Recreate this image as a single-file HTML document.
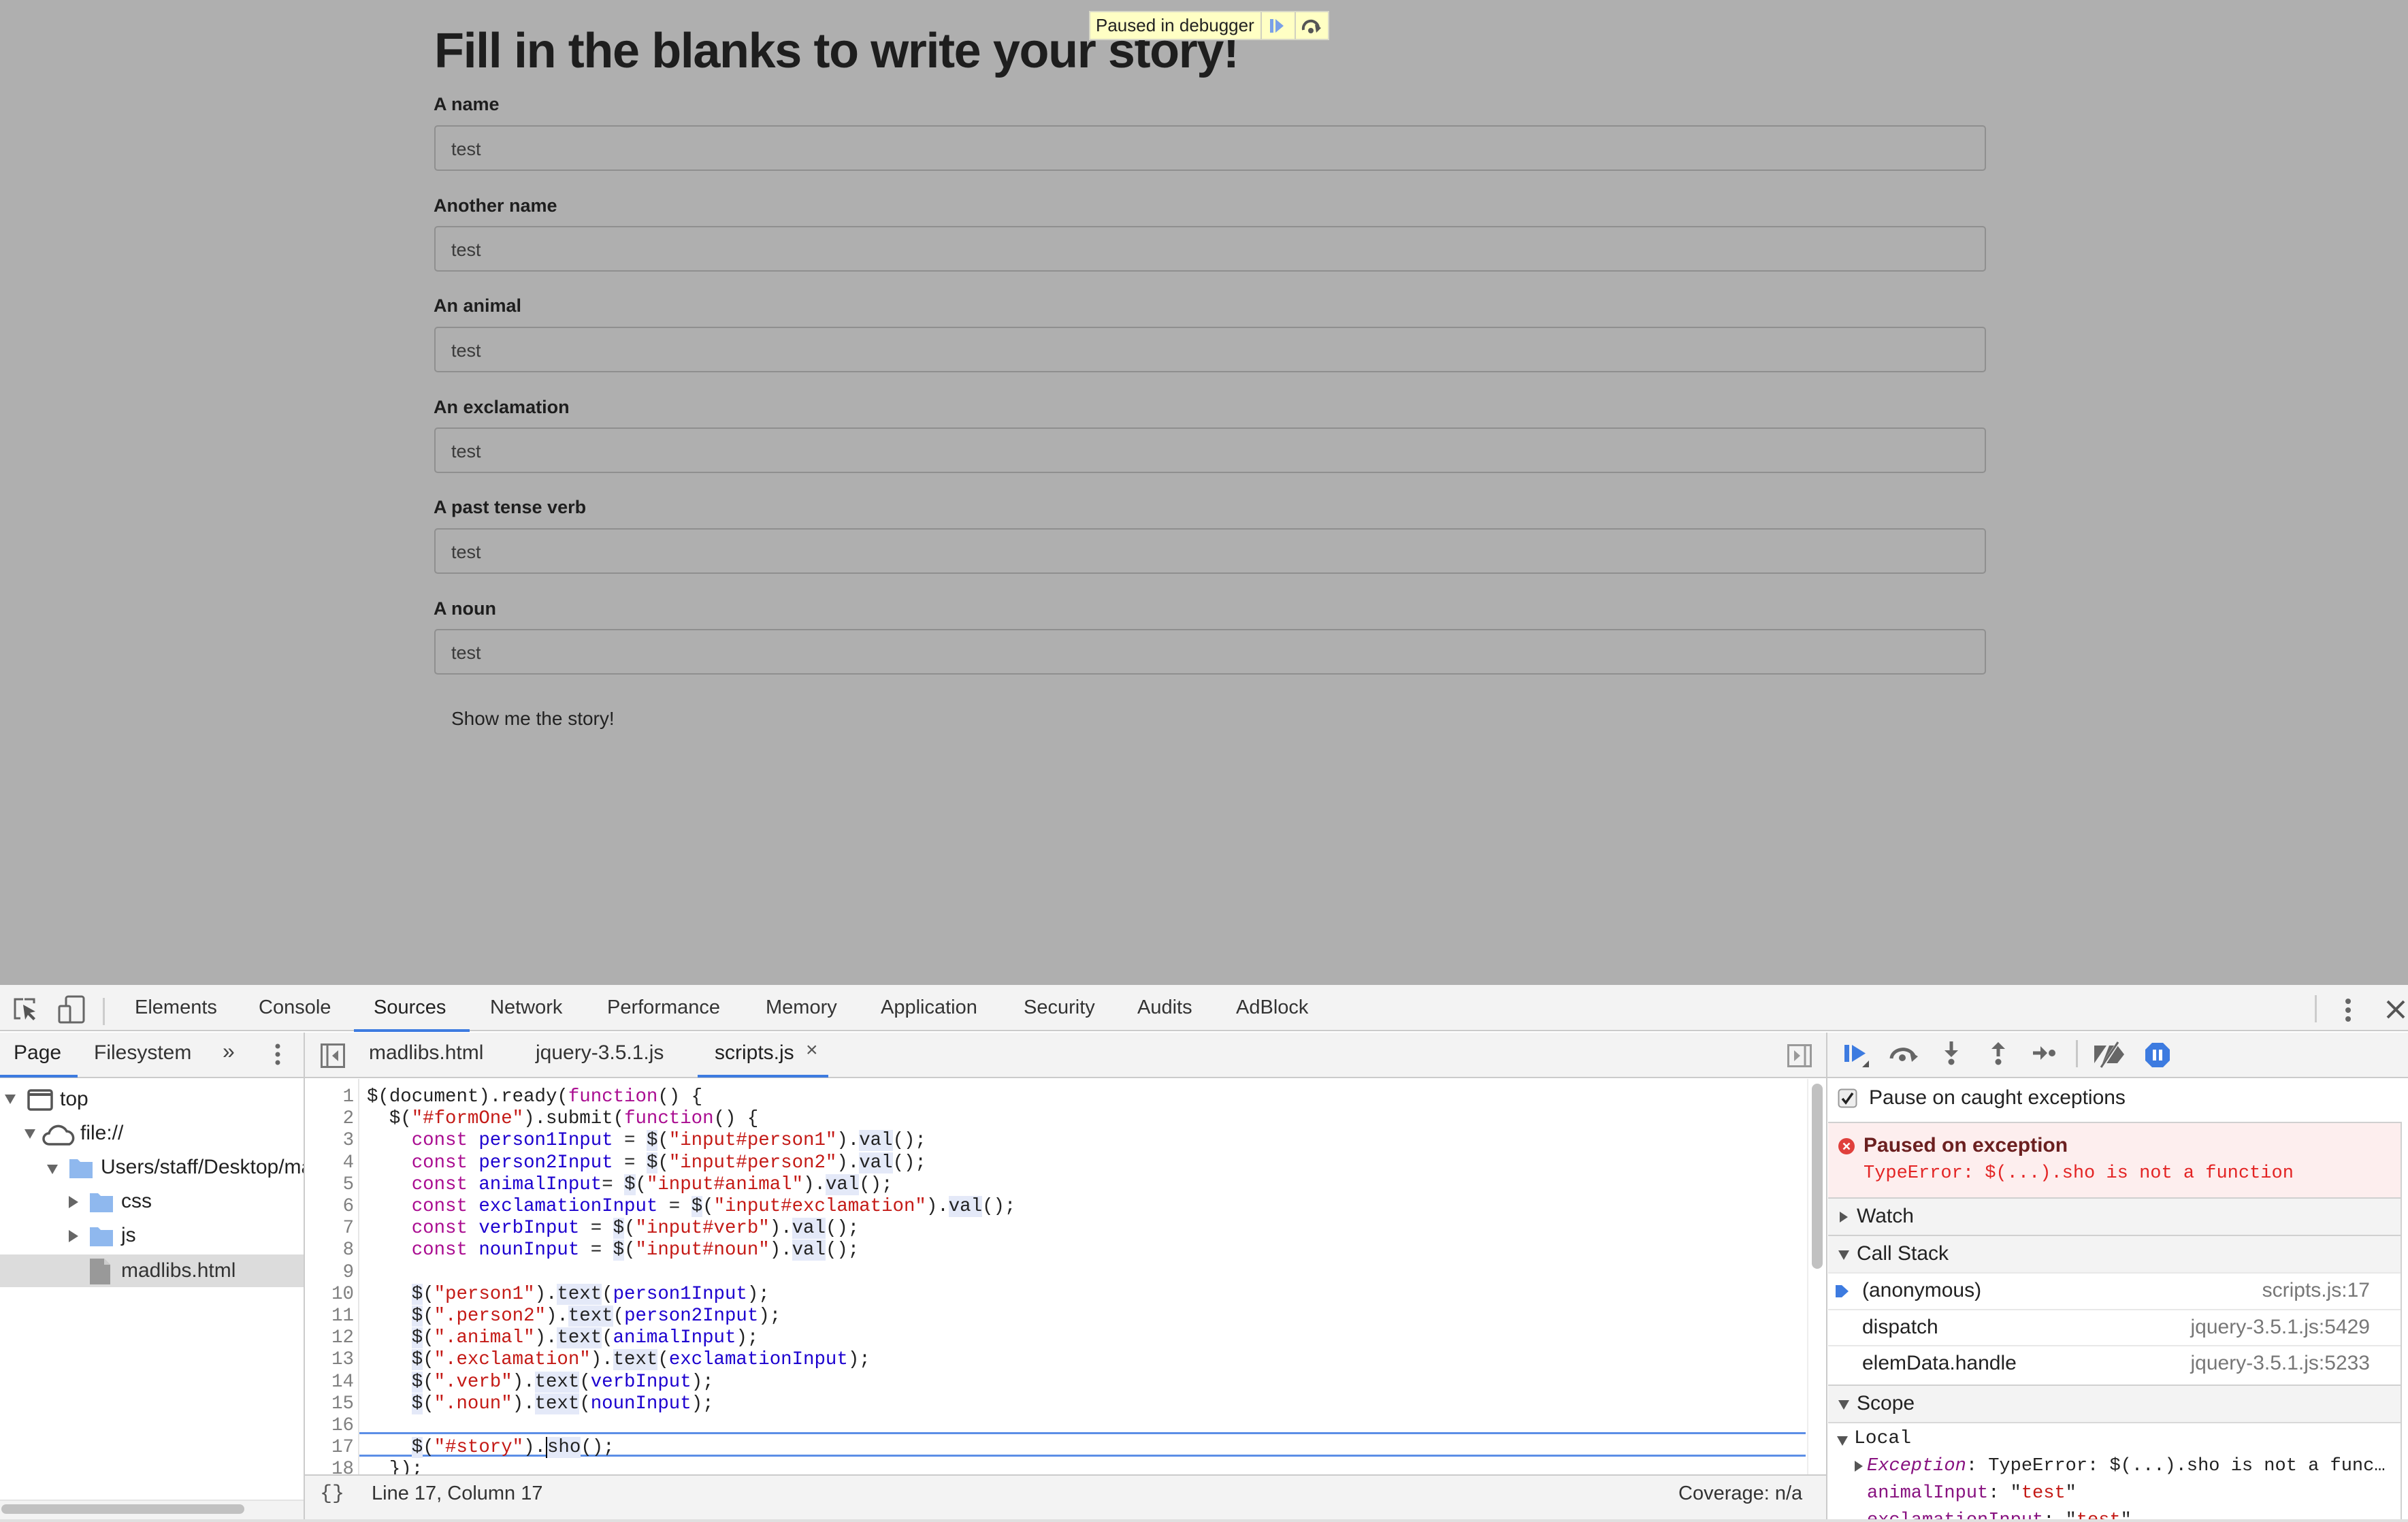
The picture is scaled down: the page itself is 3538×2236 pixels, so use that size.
<!DOCTYPE html>
<html><head><meta charset="utf-8"><style>
*{margin:0;padding:0;box-sizing:border-box}
body{width:3538px;height:2236px;overflow:hidden;position:relative;background:#afafaf;font-family:"Liberation Sans",sans-serif;color:#222}
.a{position:absolute;white-space:nowrap}
.lbl{position:absolute;left:637px;font-size:27px;font-weight:bold;color:#1e1e1e;line-height:30px}
.inp{position:absolute;left:638px;width:2280px;height:67px;border:2px solid #8f8f8f;border-radius:5px;background:#afafaf}
.inp span{position:absolute;left:23px;top:18px;font-size:27px;color:#3a3a3a}
.mono{font-family:"Liberation Mono","DejaVu Sans Mono",monospace}
.tab{position:absolute;top:1462px;font-size:29px;color:#333;line-height:36px}
.code{position:absolute;left:539px;font-family:"Liberation Mono",monospace;font-size:27.4px;line-height:32.2px;white-space:pre;color:#222}
.ln{position:absolute;width:520px;text-align:right;left:0;font-family:"Liberation Mono",monospace;font-size:27.4px;line-height:32.2px;color:#808080}
.k{color:#aa0d91}.s{color:#c41a16}.v{color:#1c00cf}.h{background:#e4e9f8}
.sec{position:absolute;left:2686px;width:842px;background:#f3f3f3;border-top:2px solid #d0d0d0;font-size:30px;color:#222}
.row{position:absolute;left:2686px;width:842px;background:#fff;border-top:2px solid #e8e8e8;font-size:30px;color:#222}
.tree{position:absolute;font-size:30px;color:#222}
</style></head><body>

<div class="a" style="left:638px;top:30px;font-size:72px;font-weight:bold;color:#1e1e1e;letter-spacing:-1.4px;line-height:90px">Fill in the blanks to write your story!</div>
<div class="a" style="left:1600px;top:16px;width:353px;height:43px;background:#ffffc4;border:2px solid #d8d8c8;font-size:26px;line-height:38px;padding-left:8px;color:#222">Paused in debugger
<div class="a" style="left:250px;top:0;width:2px;height:40px;background:#d0d0c0"></div>
<svg class="a" style="left:262px;top:8px" width="26" height="24"><rect x="2" y="2" width="5" height="20" fill="#7aa0e8"/><path d="M10 2 L22 12 L10 22Z" fill="#7aa0e8"/></svg>
<div class="a" style="left:300px;top:0;width:2px;height:40px;background:#d0d0c0"></div>
<svg class="a" style="left:308px;top:8px" width="34" height="26"><path d="M5 18 A11 11 0 0 1 27 14" stroke="#555" stroke-width="4" fill="none"/><path d="M22 10 L31 15 L24 22Z" fill="#555"/><circle cx="16" cy="19" r="4" fill="#555"/></svg>
</div>

<div class="lbl" style="top:138px">A name</div>
<div class="inp" style="top:184px"><span>test</span></div>
<div class="lbl" style="top:287px">Another name</div>
<div class="inp" style="top:332px"><span>test</span></div>
<div class="lbl" style="top:434px">An animal</div>
<div class="inp" style="top:480px"><span>test</span></div>
<div class="lbl" style="top:583px">An exclamation</div>
<div class="inp" style="top:628px"><span>test</span></div>
<div class="lbl" style="top:730px">A past tense verb</div>
<div class="inp" style="top:776px"><span>test</span></div>
<div class="lbl" style="top:879px">A noun</div>
<div class="inp" style="top:924px"><span>test</span></div>
<div class="a" style="left:663px;top:1040px;font-size:28px;color:#222">Show me the story!</div>

<!-- devtools -->
<div class="a" style="left:0;top:1447px;width:3538px;height:789px;background:#fff"></div>
<div class="a" style="left:0;top:1447px;width:3538px;height:68px;background:#f3f3f3;border-bottom:2px solid #cbcbcb"></div>
<svg class="a" style="left:20px;top:1466px" width="40" height="36"><path d="M14 2 H2 V30 H10" stroke="#666" stroke-width="3" fill="none"/><path d="M16 2 H30 V8" stroke="#666" stroke-width="3" fill="none"/><path d="M14 10 L32 20 L24 22 L32 30 L29 33 L21 25 L17 32Z" fill="#555"/></svg>
<svg class="a" style="left:85px;top:1462px" width="42" height="42"><rect x="12" y="2" width="26" height="38" rx="3" stroke="#666" stroke-width="3" fill="none"/><rect x="2" y="16" width="16" height="24" rx="2" stroke="#666" stroke-width="3" fill="#f3f3f3"/></svg>
<div class="a" style="left:151px;top:1466px;width:3px;height:40px;background:#ccc"></div>
<div class="tab" style="left:198px">Elements</div>
<div class="tab" style="left:380px">Console</div>
<div class="tab" style="left:549px;color:#222">Sources</div>
<div class="a" style="left:520px;top:1512px;width:170px;height:4px;background:#3d7be0"></div>
<div class="tab" style="left:720px">Network</div>
<div class="tab" style="left:892px">Performance</div>
<div class="tab" style="left:1125px">Memory</div>
<div class="tab" style="left:1294px">Application</div>
<div class="tab" style="left:1504px">Security</div>
<div class="tab" style="left:1671px">Audits</div>
<div class="tab" style="left:1816px">AdBlock</div>
<div class="a" style="left:3401px;top:1462px;width:3px;height:40px;background:#ccc"></div>
<svg class="a" style="left:3440px;top:1465px" width="20" height="40"><circle cx="10" cy="6" r="4" fill="#666"/><circle cx="10" cy="19" r="4" fill="#666"/><circle cx="10" cy="32" r="4" fill="#666"/></svg>
<svg class="a" style="left:3505px;top:1468px" width="30" height="30"><path d="M3 3 L27 27 M27 3 L3 27" stroke="#555" stroke-width="4"/></svg>

<!-- second toolbar -->
<div class="a" style="left:0;top:1517px;width:3538px;height:67px;background:#f3f3f3;border-bottom:2px solid #cbcbcb"></div>
<div class="a" style="left:20px;top:1530px;font-size:30px;color:#222">Page</div>
<div class="a" style="left:0;top:1579px;width:114px;height:4px;background:#3d7be0"></div>
<div class="a" style="left:138px;top:1530px;font-size:30px;color:#333">Filesystem</div>
<div class="a" style="left:327px;top:1526px;font-size:32px;color:#444">»</div>
<svg class="a" style="left:400px;top:1532px" width="16" height="36"><circle cx="8" cy="5" r="3.5" fill="#666"/><circle cx="8" cy="17" r="3.5" fill="#666"/><circle cx="8" cy="29" r="3.5" fill="#666"/></svg>
<div class="a" style="left:446px;top:1517px;width:2px;height:719px;background:#cbcbcb"></div>
<svg class="a" style="left:471px;top:1533px" width="36" height="36"><rect x="1.5" y="1.5" width="33" height="33" stroke="#777" stroke-width="3" fill="none"/><path d="M10 2 V34" stroke="#777" stroke-width="3"/><path d="M26 10 L17 18 L26 26Z" fill="#777"/></svg>
<div class="a" style="left:542px;top:1530px;font-size:30px;color:#333">madlibs.html</div>
<div class="a" style="left:787px;top:1530px;font-size:30px;color:#333">jquery-3.5.1.js</div>
<div class="a" style="left:1050px;top:1530px;font-size:30px;color:#222">scripts.js</div>
<div class="a" style="left:1184px;top:1526px;font-size:30px;color:#555">×</div>
<div class="a" style="left:1025px;top:1579px;width:192px;height:4px;background:#3d7be0"></div>
<svg class="a" style="left:2626px;top:1534px" width="36" height="34"><rect x="1.5" y="1.5" width="33" height="31" stroke="#999" stroke-width="3" fill="none"/><path d="M26 2 V32" stroke="#999" stroke-width="3"/><path d="M10 9 L19 17 L10 25Z" fill="#999"/></svg>
<div class="a" style="left:2683px;top:1517px;width:2px;height:719px;background:#cbcbcb"></div>

<!-- debugger toolbar icons -->
<svg class="a" style="left:2708px;top:1530px" width="40" height="40"><rect x="2" y="5" width="7" height="25" fill="#3d7be0"/><path d="M13 5 L33 17.5 L13 30Z" fill="#3d7be0"/><path d="M38 28 V38 H28Z" fill="#555"/></svg>
<svg class="a" style="left:2774px;top:1533px" width="46" height="30"><path d="M5 22 A17 14 0 0 1 38 18" stroke="#666" stroke-width="5" fill="none"/><path d="M32 12 L44 19 L35 27Z" fill="#666"/><circle cx="21" cy="21" r="5" fill="#666"/></svg>
<svg class="a" style="left:2855px;top:1530px" width="24" height="36"><path d="M12 0 V16" stroke="#666" stroke-width="5"/><path d="M2 13 H22 L12 23Z" fill="#666"/><circle cx="12" cy="30" r="4.5" fill="#666"/></svg>
<svg class="a" style="left:2924px;top:1530px" width="24" height="36"><path d="M12 8 V22" stroke="#666" stroke-width="5"/><path d="M2 11 H22 L12 1Z" fill="#666"/><circle cx="12" cy="30" r="4.5" fill="#666"/></svg>
<svg class="a" style="left:2986px;top:1536px" width="36" height="22"><path d="M1 11 H14" stroke="#666" stroke-width="5"/><path d="M12 1 L22 11 L12 21Z" fill="#666"/><circle cx="29" cy="11" r="5" fill="#666"/></svg>
<div class="a" style="left:3050px;top:1528px;width:3px;height:40px;background:#c8c8c8"></div>
<svg class="a" style="left:3075px;top:1528px" width="48" height="42"><path d="M2 8 H20 L2 34Z" fill="#666"/><path d="M24 8 H36 L46 21 L36 34 H14Z" fill="#666"/><path d="M38 2 L12 42" stroke="#f3f3f3" stroke-width="5"/><path d="M37 3 L12 40" stroke="#666" stroke-width="3"/></svg>
<svg class="a" style="left:3151px;top:1531px" width="38" height="38"><path d="M11 1 H27 L37 11 V27 L27 37 H11 L1 27 V11Z" fill="#3d7be0"/><rect x="12" y="11" width="5" height="16" fill="#fff"/><rect x="21" y="11" width="5" height="16" fill="#fff"/></svg>

<!-- tree -->
<svg class="a" style="left:6px;top:1607px" width="18" height="16"><path d="M1 1 H17 L9 15Z" fill="#666"/></svg>
<svg class="a" style="left:40px;top:1600px" width="38" height="32"><rect x="2" y="2" width="34" height="28" rx="3" stroke="#555" stroke-width="3.5" fill="none"/><path d="M2 8 H36" stroke="#555" stroke-width="4"/></svg>
<div class="tree" style="left:88px;top:1598px">top</div>
<svg class="a" style="left:35px;top:1658px" width="18" height="16"><path d="M1 1 H17 L9 15Z" fill="#666"/></svg>
<svg class="a" style="left:62px;top:1650px" width="50" height="34"><path d="M10 31 A8 8 0 0 1 10 15 A14 14 0 0 1 36 12 A10 10 0 0 1 40 31Z" stroke="#555" stroke-width="3.5" fill="none"/></svg>
<div class="tree" style="left:118px;top:1648px">file://</div>
<svg class="a" style="left:68px;top:1710px" width="18" height="16"><path d="M1 1 H17 L9 15Z" fill="#666"/></svg>
<svg class="a" style="left:101px;top:1700px" width="36" height="32"><path d="M1 3 H13 L17 7 H35 V31 H1Z" fill="#8fb8ee"/></svg>
<div class="a" style="left:148px;top:1698px;width:298px;overflow:hidden;font-size:30px;color:#222;white-space:nowrap">Users/staff/Desktop/madlibs</div>
<svg class="a" style="left:100px;top:1756px" width="16" height="20"><path d="M1 1 L15 10 L1 19Z" fill="#666"/></svg>
<svg class="a" style="left:131px;top:1750px" width="36" height="32"><path d="M1 3 H13 L17 7 H35 V31 H1Z" fill="#8fb8ee"/></svg>
<div class="tree" style="left:178px;top:1748px">css</div>
<svg class="a" style="left:100px;top:1806px" width="16" height="20"><path d="M1 1 L15 10 L1 19Z" fill="#666"/></svg>
<svg class="a" style="left:131px;top:1800px" width="36" height="32"><path d="M1 3 H13 L17 7 H35 V31 H1Z" fill="#8fb8ee"/></svg>
<div class="tree" style="left:178px;top:1798px">js</div>
<div class="a" style="left:0;top:1843px;width:446px;height:48px;background:#dcdcdc"></div>
<svg class="a" style="left:131px;top:1848px" width="32" height="40"><path d="M1 1 H22 L31 10 V39 H1Z" fill="#999"/><path d="M22 1 V10 H31" fill="#ccc"/></svg>
<div class="tree" style="left:178px;top:1850px;color:#333">madlibs.html</div>
<div class="a" style="left:0;top:2203px;width:446px;height:33px;background:#f3f3f3;border-top:2px solid #e4e4e4"></div>
<div class="a" style="left:2px;top:2210px;width:357px;height:14px;background:#c1c1c1;border-radius:7px"></div>

<!-- editor -->
<div class="a" style="left:526px;top:1585px;width:2px;height:581px;background:#e6e6e6"></div>
<div class="a" style="left:528px;top:2104px;width:2125px;height:3px;background:#5c8ee6"></div>
<div class="a" style="left:528px;top:2137px;width:2125px;height:3px;background:#5c8ee6"></div>
<div class="a" style="left:2662px;top:1592px;width:16px;height:272px;background:#c1c1c1;border-radius:8px"></div>
<div class="a" style="left:2655px;top:1585px;width:2px;height:581px;background:#eee"></div>
<div class="ln" style="top:1596px">1<br>2<br>3<br>4<br>5<br>6<br>7<br>8<br>9<br>10<br>11<br>12<br>13<br>14<br>15<br>16<br>17<br>18</div>
<div class="a" style="left:0;top:1585px;width:2655px;height:581px;overflow:hidden">
<div class="code" style="top:11px">$(document).ready(<span class="k">function</span>() {
  $(<span class="s">"#formOne"</span>).submit(<span class="k">function</span>() {
    <span class="k">const</span> <span class="v">person1Input</span> = <span class="h">$</span>(<span class="s">"input#person1"</span>).<span class="h">val</span>();
    <span class="k">const</span> <span class="v">person2Input</span> = <span class="h">$</span>(<span class="s">"input#person2"</span>).<span class="h">val</span>();
    <span class="k">const</span> <span class="v">animalInput</span>= <span class="h">$</span>(<span class="s">"input#animal"</span>).<span class="h">val</span>();
    <span class="k">const</span> <span class="v">exclamationInput</span> = <span class="h">$</span>(<span class="s">"input#exclamation"</span>).<span class="h">val</span>();
    <span class="k">const</span> <span class="v">verbInput</span> = <span class="h">$</span>(<span class="s">"input#verb"</span>).<span class="h">val</span>();
    <span class="k">const</span> <span class="v">nounInput</span> = <span class="h">$</span>(<span class="s">"input#noun"</span>).<span class="h">val</span>();

    <span class="h">$</span>(<span class="s">"person1"</span>).<span class="h">text</span>(<span class="v">person1Input</span>);
    <span class="h">$</span>(<span class="s">".person2"</span>).<span class="h">text</span>(<span class="v">person2Input</span>);
    <span class="h">$</span>(<span class="s">".animal"</span>).<span class="h">text</span>(<span class="v">animalInput</span>);
    <span class="h">$</span>(<span class="s">".exclamation"</span>).<span class="h">text</span>(<span class="v">exclamationInput</span>);
    <span class="h">$</span>(<span class="s">".verb"</span>).<span class="h">text</span>(<span class="v">verbInput</span>);
    <span class="h">$</span>(<span class="s">".noun"</span>).<span class="h">text</span>(<span class="v">nounInput</span>);

    <span class="h">$</span>(<span class="s">"#story"</span>).<span class="h" style="border-left:2px solid #000">sho</span>();
  });</div></div>
<div class="a" style="left:448px;top:2166px;width:2235px;height:70px;background:#f3f3f3;border-top:2px solid #cbcbcb"></div>
<div class="a" style="left:470px;top:2178px;font-size:30px;color:#555;font-family:'Liberation Mono',monospace">{}</div>
<div class="a" style="left:546px;top:2178px;font-size:29px;color:#333">Line 17, Column 17</div>
<div class="a" style="left:2466px;top:2178px;font-size:29px;color:#333">Coverage: n/a</div>

<!-- right pane -->
<svg class="a" style="left:2700px;top:1599px" width="30" height="30"><rect x="1.5" y="1.5" width="26" height="26" rx="4" fill="#eee" stroke="#999" stroke-width="2"/><path d="M7 15 L12 21 L22 7" stroke="#222" stroke-width="3.5" fill="none"/></svg>
<div class="a" style="left:2746px;top:1596px;font-size:30px;color:#222">Pause on caught exceptions</div>
<div class="a" style="left:2686px;top:1648px;width:842px;height:111px;background:#fdeeee;border-top:2px solid #d0d0d0"></div>
<svg class="a" style="left:2700px;top:1671px" width="26" height="26"><circle cx="13" cy="13" r="12" fill="#e0403c"/><path d="M8.5 8.5 L17.5 17.5 M17.5 8.5 L8.5 17.5" stroke="#fff" stroke-width="2.5"/></svg>
<div class="a" style="left:2738px;top:1666px;font-size:30px;font-weight:bold;color:#6b2020">Paused on exception</div>
<div class="a mono" style="left:2738px;top:1709px;font-size:27px;color:#e32424">TypeError: $(...).sho is not a function</div>
<div class="sec" style="top:1759px;height:55px"><svg class="a" style="left:16px;top:18px" width="14" height="18"><path d="M1 1 L13 9 L1 17Z" fill="#555"/></svg><span class="a" style="left:42px;top:9px">Watch</span></div>
<div class="sec" style="top:1814px;height:55px"><svg class="a" style="left:14px;top:20px" width="18" height="16"><path d="M1 1 H17 L9 15Z" fill="#555"/></svg><span class="a" style="left:42px;top:9px">Call Stack</span></div>
<div class="row" style="top:1869px;height:54px"><svg class="a" style="left:10px;top:14px" width="22" height="24"><path d="M1 3 H10 L20 12 L10 21 H1Z" fill="#3d7be0"/></svg><span class="a" style="left:50px;top:8px">(anonymous)</span><span class="a" style="right:46px;top:8px;color:#777">scripts.js:17</span></div>
<div class="row" style="top:1923px;height:53px"><span class="a" style="left:50px;top:8px">dispatch</span><span class="a" style="right:46px;top:8px;color:#777">jquery-3.5.1.js:5429</span></div>
<div class="row" style="top:1976px;height:58px"><span class="a" style="left:50px;top:8px">elemData.handle</span><span class="a" style="right:46px;top:8px;color:#777">jquery-3.5.1.js:5233</span></div>
<div class="sec" style="top:2034px;height:55px"><svg class="a" style="left:14px;top:20px" width="18" height="16"><path d="M1 1 H17 L9 15Z" fill="#555"/></svg><span class="a" style="left:42px;top:9px">Scope</span></div>
<div class="a" style="left:2686px;top:2089px;width:842px;height:147px;background:#fff;border-top:2px solid #d8d8d8;overflow:hidden">
<svg class="a" style="left:12px;top:18px" width="18" height="16"><path d="M1 1 H17 L9 15Z" fill="#555"/></svg>
<div class="a mono" style="left:38px;top:7px;font-size:28px;color:#222">Local</div>
<svg class="a" style="left:38px;top:54px" width="14" height="18"><path d="M1 1 L13 9 L1 17Z" fill="#555"/></svg>
<div class="a mono" style="left:57px;top:48px;font-size:27px;color:#222"><i style="color:#881280">Exception</i>: TypeError: $(...).sho is not a func…</div>
<div class="a mono" style="left:57px;top:88px;font-size:27px;color:#222"><span style="color:#881280">animalInput</span>: "<span style="color:#c41a16">test</span>"</div>
<div class="a mono" style="left:57px;top:128px;font-size:27px;color:#222"><span style="color:#881280">exclamationInput</span>: "<span style="color:#c41a16">test</span>"</div>
</div>
<div class="a" style="left:3527px;top:1648px;width:2px;height:588px;background:#d0d0d0"></div>
<div class="a" style="left:0;top:2232px;width:3538px;height:4px;background:#e0e0e0"></div>
</body></html>
